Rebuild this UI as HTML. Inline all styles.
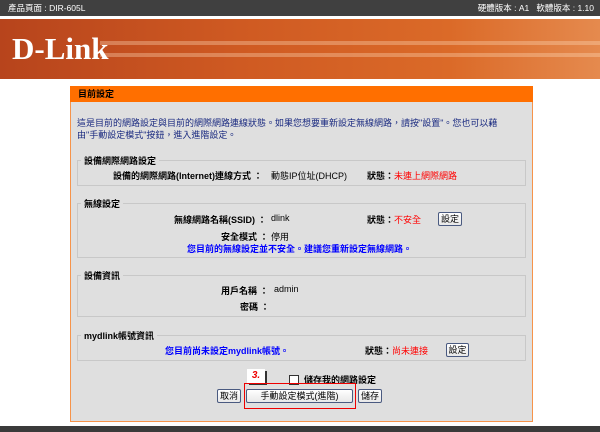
<!DOCTYPE html>
<html><head><meta charset="utf-8"><style>
*{margin:0;padding:0;box-sizing:border-box}
body{width:600px;height:432px;overflow:hidden;background:#fff;font-family:"Liberation Sans","Noto Sans CJK TC",sans-serif;font-size:9px;color:#000;position:relative}
.a{position:absolute;white-space:nowrap}
.top{left:0;top:0;width:600px;height:16px;background:#404040;color:#fff;font-size:8.5px;line-height:16px}
.banner{left:0;top:19px;width:600px;height:60px;background:linear-gradient(90deg,#b7441c 0%,#cf5a22 40%,#db6a28 75%,#e58a4e 100%)}
.stripe{position:absolute;left:100px;right:0;height:4px;background:rgba(255,220,190,.35)}
.logo{left:12px;top:31px;color:#fff;font:bold 31px "Liberation Serif",serif;letter-spacing:0}
.panel{left:70px;top:86px;width:463px;height:336px;border:1px solid #f6934a;background:#dfdfdf}
.hdr{left:70px;top:86px;width:463px;height:16px;background:#ff6f00;font-weight:bold;padding-left:8px;line-height:16px}
fieldset{position:absolute;border:1px solid #c8c8c8;left:77px;width:449px}
.lg{position:absolute;background:#dfdfdf;font-weight:bold;padding:0 3px;left:81px}
.b{font-weight:bold}
.red{color:#f00}.blue{color:#00f;font-weight:bold}
.btn{position:absolute;border:1px solid #4a5a80;border-radius:2px;background:linear-gradient(#fff,#e8e8e8);text-align:center;line-height:12px;height:14px;font-size:9px}
</style></head><body>
<div class="a top"><span style="position:absolute;left:8px">產品頁面 : DIR-605L</span><span style="position:absolute;right:6px">硬體版本 : A1 &nbsp; 軟體版本 : 1.10</span></div>
<div class="a banner"><div class="stripe" style="top:22px"></div><div class="stripe" style="top:34px"></div></div>
<div class="a logo">D-Link</div>
<div class="a panel"></div>
<div class="a hdr">目前設定</div>
<div class="a" style="left:77px;top:117px;color:#1a2a80;line-height:12px">這是目前的網路設定與目前的網際網路連線狀態。如果您想要重新設定無線網路，請按"設置"。您也可以藉<br>由"手動設定模式"按鈕，進入進階設定。</div>
<fieldset style="top:160px;height:26px"></fieldset><div class="lg" style="top:154px">設備網際網路設定</div>
<div class="a b" style="left:113px;top:169px">設備的網際網路(Internet)連線方式 ：</div>
<div class="a" style="left:271px;top:169px">動態IP位址(DHCP)</div>
<div class="a" style="left:367px;top:169px"><b>狀態：</b><span class="red">未連上網際網路</span></div>
<fieldset style="top:203px;height:55px"></fieldset><div class="lg" style="top:197px">無線設定</div>
<div class="a b" style="left:174px;top:213px">無線網路名稱(SSID) ：</div><div class="a" style="left:271px;top:213px">dlink</div>
<div class="a" style="left:367px;top:213px"><b>狀態：</b><span class="red">不安全</span></div>
<div class="btn" style="left:438px;top:212px;width:24px">設定</div>
<div class="a b" style="left:221px;top:230px">安全模式 ：</div><div class="a" style="left:271px;top:230px">停用</div>
<div class="a blue" style="left:187px;top:242px">您目前的無線設定並不安全。建議您重新設定無線網路。</div>
<fieldset style="top:275px;height:42px"></fieldset><div class="lg" style="top:269px">設備資訊</div>
<div class="a b" style="left:221px;top:284px">用戶名稱 ：</div><div class="a" style="left:274px;top:284px">admin</div>
<div class="a b" style="left:240px;top:300px">密碼 ：</div>
<fieldset style="top:335px;height:26px"></fieldset><div class="lg" style="top:329px">mydlink帳號資訊</div>
<div class="a blue" style="left:165px;top:344px">您目前尚未設定mydlink帳號。</div>
<div class="a" style="left:365px;top:344px"><b>狀態：</b><span class="red">尚未連接</span></div>
<div class="btn" style="left:446px;top:343px;width:23px">設定</div>
<div class="a" style="left:289px;top:375px;width:10px;height:10px;border:1px solid #333;background:#fff"></div>
<div class="a b" style="left:304px;top:373px">儲存我的網路設定</div>
<div class="a" style="left:247px;top:369px;width:18px;height:14px;background:#fff;box-shadow:2px 2px 0 #333;color:#e00;font:italic bold 10px 'Liberation Sans',sans-serif;text-align:center;line-height:14px">3.</div>
<div class="btn" style="left:217px;top:389px;width:24px">取消</div>
<div class="btn" style="left:246px;top:389px;width:107px">手動設定模式(進階)</div>
<div class="btn" style="left:358px;top:389px;width:24px">儲存</div>
<div class="a" style="left:244px;top:383px;width:112px;height:26px;border:1.5px solid #e00"></div>
<div class="a" style="left:0;top:426px;width:600px;height:6px;background:#3a3a3a"></div>
</body></html>
